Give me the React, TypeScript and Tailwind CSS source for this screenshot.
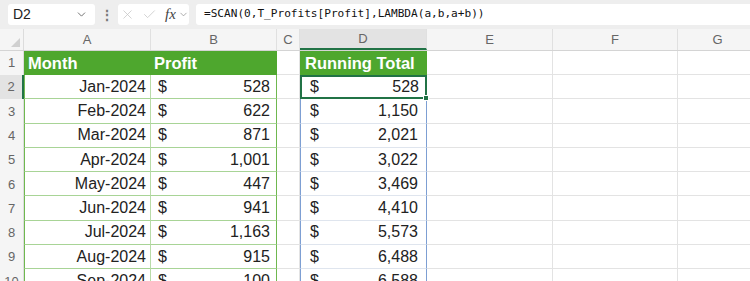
import { ChevronDown, X, Check } from "lucide-react";

const cols = ["A", "B", "C", "D", "E", "F", "G"];
const widths = [127, 126, 23, 127, 126, 125, 80];

const rows = [
  ["Jan-2024", "528", "528"],
  ["Feb-2024", "622", "1,150"],
  ["Mar-2024", "871", "2,021"],
  ["Apr-2024", "1,001", "3,022"],
  ["May-2024", "447", "3,469"],
  ["Jun-2024", "941", "4,410"],
  ["Jul-2024", "1,163", "5,573"],
  ["Aug-2024", "915", "6,488"],
  ["Sep-2024", "100", "6,588"],
];

const FormulaBar = () => (
  <div className="h-[29px] bg-[#eeeeee] flex items-center pl-2">
    <div className="w-[87px] h-[21px] bg-white rounded-[3px] flex items-center justify-between px-[5px] text-[14px] text-[#222]">
      <span>D2</span>
      <ChevronDown size={13} strokeWidth={1.5} className="text-[#555] mr-[2px]" />
    </div>
    <span className="ml-[5px] text-[#777] text-[14px] leading-none font-bold">⋮</span>
    <div className="ml-[4px] w-[71px] h-[21px] bg-white rounded-[3px] flex items-center pl-[2px] gap-[4px] text-[#c4c4c4]">
      <X size={15} strokeWidth={1.2} />
      <Check size={15} strokeWidth={1.2} className="ml-[3px]" />
      <span className="ml-[4px] text-[#444] italic text-[15px] font-['Liberation_Serif',serif] leading-none">
        fx
      </span>
      <ChevronDown size={11} strokeWidth={1.5} className="text-[#888] -ml-[2px]" />
    </div>
    <div className="ml-[7px] flex-1 h-[21px] bg-white rounded-l-[3px] flex items-center pl-2 text-[11.1px] text-[#111] font-['DejaVu_Sans_Mono',monospace]">
      =SCAN(0,T_Profits[Profit],LAMBDA(a,b,a+b))
    </div>
  </div>
);

const ColumnHeaders = () => (
  <div className="h-[22px] flex bg-[#f5f5f5] border-b border-[#d4d4d4] text-[13px] text-[#666]">
    <div className="w-[24px] shrink-0 border-r border-[#dcdcdc] relative">
      <div className="absolute right-[3px] bottom-[3px] w-0 h-0 border-l-[9px] border-l-transparent border-b-[9px] border-b-[#d0d0d0]" />
    </div>
    {cols.map((c, i) => (
      <div
        key={c}
        style={{ width: widths[i] }}
        className={
          "shrink-0 flex items-center justify-center border-r border-[#e0e0e0] " +
          (c === "D" ? "bg-[#e3e3e3] border-b-2 border-b-[#217346]" : "")
        }
      >
        {c}
      </div>
    ))}
  </div>
);

const RowNum = ({ n, active }: { n: number; active?: boolean }) => (
  <div
    className={
      "w-[24px] shrink-0 flex items-center justify-center text-[13px] text-[#666] border-r " +
      (active ? "bg-[#e3e3e3] border-r-2 border-r-[#217346]" : "bg-[#f5f5f5] border-r-[#dcdcdc]")
    }
  >
    {n}
  </div>
);

const Blank = ({ w, last }: { w: number; last?: boolean }) => (
  <div
    style={{ width: w }}
    className={"shrink-0 border-b border-[#e3e3e3] " + (last ? "" : "border-r border-r-[#e3e3e3]")}
  />
);

const Money = ({ value, pr }: { value: string; pr: string }) => (
  <div className={"flex-1 flex items-center justify-between " + pr}>
    <span>$</span>
    <span>{value}</span>
  </div>
);

export default function App() {
  return (
    <div className="w-[750px] h-[281px] overflow-hidden bg-white font-['Liberation_Sans',Arial,sans-serif]">
      <FormulaBar />
      <ColumnHeaders />
      {/* header row */}
      <div className="h-[24px] flex">
        <RowNum n={1} />
        <div className="w-[253px] shrink-0 flex bg-[#4ea72e] text-white font-bold text-[16.5px] items-center">
          <div className="w-[127px] pl-[4px]">Month</div>
          <div className="w-[126px] pl-[3px]">Profit</div>
        </div>
        <Blank w={23} />
        <div className="w-[127px] shrink-0 bg-[#4ea72e] text-white font-bold text-[16.5px] flex items-center pl-[5px]">
          Running Total
        </div>
        <Blank w={126} />
        <Blank w={125} />
        <Blank w={80} last />
      </div>
      {rows.map((r, i) => (
        <div key={i} className="h-[24.3px] flex text-[16px] text-[#222]">
          <RowNum n={i + 2} active={i === 0} />
          <div className="w-[127px] shrink-0 flex items-center justify-end pr-[4px] border-l border-l-[#6fb84f] border-r border-r-[#b9dca8] border-b border-b-[#a8d496]">
            {r[0]}
          </div>
          <div className="w-[126px] shrink-0 flex border-r border-r-[#6fb84f] border-b border-b-[#a8d496] pl-[7px]">
            <Money value={r[1]} pr="pr-[6px]" />
          </div>
          <Blank w={23} />
          {i === 0 ? (
            <div className="w-[127px] shrink-0 flex pl-[8px] border-2 border-[#217346] relative">
              <Money value={r[2]} pr="pr-[6px]" />
              <div className="absolute -right-[4px] -bottom-[4px] w-[6px] h-[6px] bg-[#217346] border border-white" />
            </div>
          ) : (
            <div className="w-[127px] shrink-0 flex pl-[9px] border-l border-l-[#7d9fd3] border-r border-r-[#7d9fd3] border-b border-b-[#dfe5ee]">
              <Money value={r[2]} pr="pr-[8px]" />
            </div>
          )}
          <Blank w={126} />
          <Blank w={125} />
          <Blank w={80} last />
        </div>
      ))}
    </div>
  );
}
